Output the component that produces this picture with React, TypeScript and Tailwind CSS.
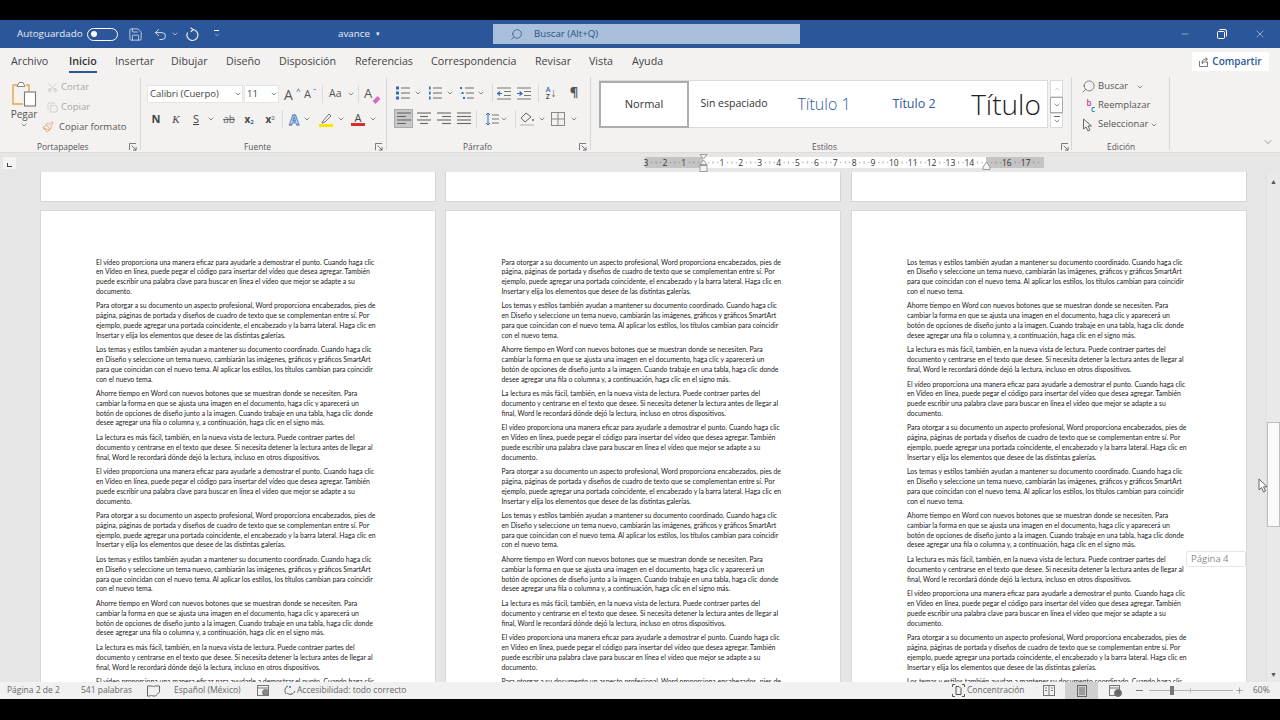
import React from "react";
import { Scissors, Copy, Paintbrush, ChevronDown, ChevronUp, Save, Undo2, Search, Minus, X, Plus } from "lucide-react";

const A = ["El vídeo proporciona una manera eficaz para ayudarle a demostrar el punto. Cuando haga clic","en Vídeo en línea, puede pegar el código para insertar del vídeo que desea agregar. También","puede escribir una palabra clave para buscar en línea el vídeo que mejor se adapte a su","documento."];
const B = ["Para otorgar a su documento un aspecto profesional, Word proporciona encabezados, pies de","página, páginas de portada y diseños de cuadro de texto que se complementan entre sí. Por","ejemplo, puede agregar una portada coincidente, el encabezado y la barra lateral. Haga clic en","Insertar y elija los elementos que desee de las distintas galerías."];
const C = ["Los temas y estilos también ayudan a mantener su documento coordinado. Cuando haga clic","en Diseño y seleccione un tema nuevo, cambiarán las imágenes, gráficos y gráficos SmartArt","para que coincidan con el nuevo tema. Al aplicar los estilos, los títulos cambian para coincidir","con el nuevo tema."];
const D = ["Ahorre tiempo en Word con nuevos botones que se muestran donde se necesiten. Para","cambiar la forma en que se ajusta una imagen en el documento, haga clic y aparecerá un","botón de opciones de diseño junto a la imagen. Cuando trabaje en una tabla, haga clic donde","desee agregar una fila o columna y, a continuación, haga clic en el signo más."];
const E = ["La lectura es más fácil, también, en la nueva vista de lectura. Puede contraer partes del","documento y centrarse en el texto que desee. Si necesita detener la lectura antes de llegar al","final, Word le recordará dónde dejó la lectura, incluso en otros dispositivos."];
const cycle = [A, B, C, D, E];

function Page({ start }: { start: number }) {
  const paras = Array.from({ length: 11 }, (_, i) => cycle[(start + i) % 5]);
  return (
    <div className="w-[396px] shrink-0 flex flex-col gap-[8px]">
      <div className="h-[30px] bg-white border-x border-b border-[#d4d4d4]" />
      <div className="flex-1 bg-white border-x border-t border-[#d8d8d8] pt-[46.5px] pl-[55.5px] font-['Lato',sans-serif] text-[6.87px] leading-[9.72px] text-[#222] overflow-hidden">
        {paras.map((p, i) => (
          <div key={i} className="mb-[5.05px]">
            {p.map((l, j) => <div key={j} className="whitespace-nowrap">{l}</div>)}
          </div>
        ))}
      </div>
    </div>
  );
}

const Chev = () => <ChevronDown size={8} strokeWidth={2} className="text-[#555]" />;

function Slot({ w, children }: { w: string; children?: React.ReactNode }) {
  return <div className={`${w} flex items-center justify-center shrink-0`}>{children}</div>;
}
const Sep = () => <div className="w-px h-[18px] bg-[#dadada] shrink-0" />;

function Launcher() {
  return (
    <svg width="8" height="8" viewBox="0 0 9 9" fill="none" stroke="#666" strokeWidth="1">
      <path d="M.5 8V.5H8" /><path d="M3 3l5 5M8 4.5V8H4.5" />
    </svg>
  );
}

function Lines({ kind }: { kind: "l" | "c" | "r" | "j" }) {
  const rows = { l: ["M1 2h14", "M1 5.5h9", "M1 9h14", "M1 12.5h9"], c: ["M1 2h14", "M4 5.5h8", "M1 9h14", "M4 12.5h8"], r: ["M1 2h14", "M6 5.5h9", "M1 9h14", "M6 12.5h9"], j: ["M1 2h14", "M1 5.5h14", "M1 9h14", "M1 12.5h14"] }[kind];
  return <svg width="16" height="15" viewBox="0 0 16 15" fill="none" stroke="#666" strokeWidth="1.1">{rows.map((d) => <path key={d} d={d} />)}</svg>;
}
function Bullets({ mode }: { mode: "b" | "n" | "m" }) {
  const dot = "#2b6cb8";
  return (
    <svg width="15" height="14" viewBox="0 0 15 14" fill="none">
      {[2, 7, 12].map((y, i) => (
        <g key={y}>
          {mode === "m" ? <rect x={i * 1.5} y={y - 1} width="2" height="2" fill={dot} /> : mode === "n" ? <rect x="1" y={y - 1.5} width="1.6" height="3" fill={dot} /> : <rect x="0" y={y - 1.5} width="3" height="3" fill={dot} />}
          <path d={`M${mode === "m" ? 5 + i : 5} ${y}H14`} stroke="#777" strokeWidth="1.1" />
        </g>
      ))}
    </svg>
  );
}
function Indent({ inc }: { inc?: boolean }) {
  return (
    <svg width="14" height="13" viewBox="0 0 14 13" fill="none">
      <path d="M0 1h14M0 12h14M7 4.5h7M7 8.5h7" stroke="#777" strokeWidth="1.1" />
      <path d={inc ? "M0 6.5h4M2.5 4.5l2.5 2-2.5 2" : "M5 6.5H1M3 4.5l-2.5 2 2.5 2"} stroke="#2b6cb8" strokeWidth="1.2" />
    </svg>
  );
}

const tabs: [string, string][] = [["Archivo", "w-[58px]"], ["Inicio", "w-[46px]"], ["Insertar", "w-[56px]"], ["Dibujar", "w-[55px]"], ["Diseño", "w-[53px]"], ["Disposición", "w-[76px]"], ["Referencias", "w-[76px]"], ["Correspondencia", "w-[104px]"], ["Revisar", "w-[54px]"], ["Vista", "w-[43px]"], ["Ayuda", "w-[50px]"]];

function Unit({ n }: { n: string }) {
  return (
    <div className="w-[18.9px] shrink-0 flex items-center">
      <span className="w-[6px] -ml-[3px] text-center">{n}</span>
      <span className="w-[5px] text-center text-[#777]">·</span>
      <span className="w-[4px] text-center text-[6px] text-[#777]">ı</span>
      <span className="w-[5px] text-center text-[#777]">·</span>
    </div>
  );
}

function Ruler() {
  const left = ["3", "2", "1"];
  const right = ["", "1", "2", "3", "4", "5", "6", "7", "8", "9", "10", "11", "12", "13", "14"];
  return (
    <div className="h-[19px] bg-[#e6e6e6] flex items-center relative">
      <div className="ml-[3px] w-[13px] h-[12px] bg-[#f4f4f4] flex items-end justify-center pb-[2px]">
        <div className="w-[5px] h-[4px] border-l-[1.5px] border-b-[1.5px] border-[#444]" />
      </div>
      <div className="ml-[629px] flex h-[11px] text-[8.5px] leading-[11px] text-[#333]">
        <div className="w-[58px] bg-[#c4c4c4] flex pl-[1px]">{left.map((n) => <Unit key={n} n={n} />)}</div>
        <div className="w-[283px] bg-white flex">{right.map((n, i) => <Unit key={i} n={n} />)}</div>
        <div className="w-[58px] bg-[#c4c4c4] flex">{["", "16", "17"].map((n, i) => <Unit key={i} n={n} />)}</div>
      </div>
      <svg className="absolute left-[699px] top-[1px]" width="9" height="19" viewBox="0 0 9 19" fill="#f3f3f3" stroke="#888" strokeWidth=".8">
        <path d="M1 .5h7L4.5 5z" /><path d="M4.5 6L1 10.5h7z" /><rect x="1" y="11.5" width="7" height="6" />
      </svg>
      <svg className="absolute left-[982px] top-[8px]" width="9" height="9" viewBox="0 0 9 9" fill="#f3f3f3" stroke="#888" strokeWidth=".8">
        <path d="M4.5 1L1 6v2.5h7V6z" />
      </svg>
    </div>
  );
}

export default function App() {
  return (
    <div className="w-[1280px] h-[720px] bg-black flex flex-col overflow-hidden font-['Open_Sans',sans-serif] relative">
      <div className="h-[20px] shrink-0" />
      {/* Title bar */}
      <div className="h-[28px] shrink-0 bg-[#2b579a] flex items-center text-[#e6ecf5] text-[9.8px]">
        <span className="ml-[17px] w-[70px]">Autoguardado</span>
        <div className="w-[31px] h-[13px] rounded-full border border-white flex items-center pl-[3px]"><div className="w-[6px] h-[6px] rounded-full bg-white" /></div>
        <Save size={15} strokeWidth={1.2} className="ml-[10px]" />
        <Undo2 size={15} strokeWidth={1.4} className="ml-[10px]" />
        <ChevronDown size={8} className="ml-[3px]" />
        <svg className="ml-[6px]" width="15" height="15" viewBox="0 0 15 15" fill="none" stroke="#e6ecf5" strokeWidth="1.2"><path d="M8 2.5a5.5 5.5 0 1 1-5.5 3" /><path d="M5.5.8 8.2 2.5 5.8 4.8" /></svg>
        <div className="ml-[13px] flex flex-col items-center w-[7px]"><div className="w-[5px] h-px bg-white mb-[1px]" /><ChevronDown size={6} strokeWidth={2} /></div>
        <span className="ml-[118px] w-[38px]">avance</span>
        <span className="text-[7px] w-[5px]">▾</span>
        <div className="ml-[112px] w-[307px] h-[20px] bg-[#aabfdb] flex items-center text-[#2b4f85] text-[9.7px]">
          <Search size={13} strokeWidth={1.3} className="ml-[17px] -scale-x-100" />
          <span className="ml-[11px]">Buscar (Alt+Q)</span>
        </div>
        <Minus size={10} strokeWidth={1.2} className="ml-[380px]" />
        <svg className="ml-[27px]" width="10" height="10" viewBox="0 0 10 10" fill="none" stroke="#fff" strokeWidth="1"><rect x=".5" y="2.5" width="7" height="7" rx="1" /><path d="M2.5 .5H8a1.5 1.5 0 011.5 1.5v5.5" /></svg>
        <X size={12} strokeWidth={1.1} className="ml-[27px]" />
      </div>
      {/* Tabs */}
      <div className="h-[27px] shrink-0 bg-[#f3f2f1] flex items-center text-[10.7px] text-[#444]">
        <div className="w-[11px]" />
        {tabs.map(([t, w]) => (
          <div key={t} className={`${w} h-full flex items-center relative shrink-0`}>
            <span className={t === "Inicio" ? "font-semibold text-[#333]" : ""}>{t}</span>
            {t === "Inicio" && <div className="absolute left-0 bottom-[2px] w-[28px] h-[2px] bg-[#2b579a]" />}
          </div>
        ))}
        <div className="ml-[510px] w-[77px] h-[19px] bg-white flex items-center justify-center gap-[3px] text-[#2b579a] text-[10px] font-semibold">
          <svg width="10" height="10" viewBox="0 0 10 10" fill="none" stroke="#555" strokeWidth=".8"><path d="M.5 4v5.5h8V5H3.5v2" /><path d="M3 6c0-3 2-4 5-4M6.5 .5 8.5 2 6.5 4" /></svg>
          Compartir
        </div>
      </div>
      {/* Ribbon */}
      <div className="h-[78px] shrink-0 bg-[#f3f2f1] flex text-[9.5px] text-[#555] border-b border-[#dcdcdc]">
        {/* Portapapeles */}
        <div className="w-[141px] shrink-0 border-r border-[#d6d6d6] my-[2px] flex flex-col">
          <div className="flex flex-1">
            <div className="w-[47px] flex flex-col items-center pt-[4px] pl-[1px]">
              <svg width="25" height="26" viewBox="0 0 25 26" fill="none">
                <path d="M1 4h5M14 4h3v7" stroke="#e3a44f" strokeWidth="1.4" /><path d="M1 3.5V23h10" stroke="#e3a44f" strokeWidth="1.4" fill="#faf3e6" />
                <path d="M5 5.5 7 1.5h4l2 4z" fill="#fff" stroke="#888" strokeWidth="1" />
                <rect x="12.5" y="11" width="11" height="14" fill="#fff" stroke="#777" strokeWidth="1.1" />
              </svg>
              <span className="text-[10px] leading-[13px] mt-[1px] text-[#555]">Pegar</span>
              <Chev />
            </div>
            <div className="flex flex-col pt-[2px] gap-[4px]">
              <div className="h-[16px] flex items-center gap-[3px] text-[#a8a8a8]"><Scissors size={11} strokeWidth={1} className="-rotate-90" /><span>Cortar</span></div>
              <div className="h-[16px] flex items-center gap-[3px] text-[#a8a8a8]"><Copy size={11} strokeWidth={1} /><span>Copiar</span></div>
              <div className="h-[16px] flex items-center gap-[3px] text-[#555]"><Paintbrush size={12} strokeWidth={1.3} className="text-[#d8893a] -ml-[5px]" /><span className="ml-[2px]">Copiar formato</span></div>
            </div>
          </div>
          <div className="h-[12px] -mb-[3px] flex items-center text-[8.4px] pr-[3px]"><span className="ml-[37px] flex-1">Portapapeles</span><Launcher /></div>
        </div>
        {/* Fuente */}
        <div className="w-[246px] shrink-0 border-r border-[#d6d6d6] my-[2px] flex flex-col pl-[6px]">
          <div className="flex-1 flex flex-col pt-[8px] gap-[7px]">
            <div className="h-[18px] flex items-center">
              <div className="w-[96px] h-[18px] bg-white border border-[#e4e4e4] flex items-center pl-[2px] text-[#444]"><span className="flex-1">Calibri (Cuerpo)</span><Chev /></div>
              <div className="ml-[1px] w-[35px] h-[18px] bg-white border border-[#e4e4e4] flex items-center pl-[2px] text-[#444]"><span className="flex-1">11</span><Chev /></div>
              <span className="ml-[5px] w-[12px] text-[14px] text-[#555]">A</span><span className="w-[5px] text-[8px] -mt-[6px] text-[#2b579a]">^</span>
              <span className="ml-[3px] w-[9px] text-[11px] text-[#555]">A</span><span className="w-[4px] text-[8px] -mt-[6px] text-[#2b579a]">ˇ</span>
              <div className="ml-[5px]"><Sep /></div>
              <span className="ml-[6px] w-[16px] text-[10.5px] text-[#555]">Aa</span><div className="ml-[2px]"><Chev /></div>
              <div className="ml-[3px]"><Sep /></div>
              <div className="ml-[5px] relative w-[14px] text-[13px] text-[#555]">A<div className="absolute right-[-2px] bottom-[2px] w-[7px] h-[4px] bg-[#d36fc0] -rotate-45" /></div>
            </div>
            <div className="h-[18px] flex items-center">
              <Slot w="w-[18px]"><b className="text-[11px] text-[#444]">N</b></Slot>
              <Slot w="w-[22px]"><i className="text-[11px] text-[#444] font-['Liberation_Serif',serif]">K</i></Slot>
              <Slot w="w-[18px]"><span className="text-[11px] underline text-[#444]">S</span></Slot>
              <Slot w="w-[12px]"><Chev /></Slot>
              <Slot w="w-[24px]"><span className="text-[10px] line-through text-[#666]">ab</span></Slot>
              <Slot w="w-[16px]"><b className="text-[10px] text-[#444]">x<sub className="text-[6px] text-[#2b6cb8]">2</sub></b></Slot>
              <div className="w-[5px]" />
              <Slot w="w-[16px]"><b className="text-[10px] text-[#444]">x<sup className="text-[6px] text-[#888]">2</sup></b></Slot>
              <div className="w-[4px]" /><Sep />
              <div className="w-[3px]" />
              <Slot w="w-[16px]"><span className="text-[14px] font-bold text-[#dbe8f7] [-webkit-text-stroke:0.8px_#2b6cb8]">A</span></Slot>
              <Slot w="w-[10px]"><Chev /></Slot>
              <div className="w-[6px]" />
              <Slot w="w-[16px]">
                <svg width="14" height="15" viewBox="0 0 14 15" fill="none"><path d="M4 9 10 2l2 2-6 6-3 1z" stroke="#777" /><rect x="0" y="12" width="14" height="3" fill="#ffe600" /></svg>
              </Slot>
              <div className="w-[2px]" />
              <Slot w="w-[10px]"><Chev /></Slot>
              <div className="w-[4px]" />
              <Slot w="w-[16px]"><div className="flex flex-col items-center"><span className="text-[11px] leading-[11px] text-[#444]">A</span><div className="w-[14px] h-[3px] bg-[#d92c2c]" /></div></Slot>
              <div className="w-[2px]" />
              <Slot w="w-[10px]"><Chev /></Slot>
            </div>
          </div>
          <div className="h-[12px] -mb-[3px] flex items-center text-[8.4px] pr-[3px]"><span className="ml-[97px] flex-1">Fuente</span><Launcher /></div>
        </div>
        {/* Párrafo */}
        <div className="w-[204px] shrink-0 border-r border-[#d6d6d6] my-[2px] flex flex-col pl-[7px]">
          <div className="flex-1 flex flex-col pt-[7px] gap-[7px]">
            <div className="h-[18px] flex items-center">
              <Slot w="w-[18px]"><Bullets mode="b" /></Slot><Slot w="w-[12px]"><Chev /></Slot>
              <div className="w-[2px]" /><Slot w="w-[18px]"><Bullets mode="n" /></Slot><Slot w="w-[12px]"><Chev /></Slot>
              <div className="w-[2px]" /><Slot w="w-[18px]"><Bullets mode="m" /></Slot><Slot w="w-[10px]"><Chev /></Slot>
              <div className="w-[6px]" /><Sep />
              <div className="w-[3px]" /><Slot w="w-[16px]"><Indent /></Slot>
              <div className="w-[4px]" /><Slot w="w-[16px]"><Indent inc /></Slot>
              <div className="w-[6px]" /><Sep />
              <div className="w-[2px]" /><Slot w="w-[20px]">
                <div className="flex items-center"><div className="flex flex-col text-[7px] leading-[7px] font-semibold"><span className="text-[#2b6cb8]">A</span><span className="text-[#444]">Z</span></div><span className="text-[12px] text-[#555] leading-none">↓</span></div>
              </Slot>
              <div className="w-[4px]" /><Slot w="w-[18px]"><span className="text-[13px] font-bold text-[#555]">¶</span></Slot>
            </div>
            <div className="h-[19px] flex items-center">
              <Slot w="w-[19px]"><div className="w-[19px] h-[19px] bg-[#c8c8c8] border border-[#aaa] flex items-center justify-center"><Lines kind="l" /></div></Slot>
              <div className="w-[1px]" /><Slot w="w-[20px]"><Lines kind="c" /></Slot>
              <Slot w="w-[20px]"><Lines kind="r" /></Slot>
              <Slot w="w-[20px]"><Lines kind="j" /></Slot>
              <div className="w-[2px]" /><Sep />
              <div className="w-[6px]" /><Slot w="w-[16px]">
                <svg width="15" height="14" viewBox="0 0 15 14" fill="none"><path d="M4 1v12M2 3l2-2 2 2M2 11l2 2 2-2" stroke="#2b6cb8" /><path d="M8 3h7M8 7h7M8 11h7" stroke="#777" /></svg>
              </Slot>
              <Slot w="w-[10px]"><Chev /></Slot>
              <div className="w-[6px]" /><Sep />
              <div className="w-[3px]" /><Slot w="w-[16px]">
                <svg width="15" height="14" viewBox="0 0 15 14" fill="none"><path d="M6 1 1 6l4 4 6-5z" stroke="#666" /><rect x="0" y="12" width="14" height="2" fill="#d2d2d2" /><circle cx="13" cy="8" r="1" fill="#666" /></svg>
              </Slot>
              <div className="w-[2px]" /><Slot w="w-[10px]"><Chev /></Slot>
              <div className="w-[3px]" /><Slot w="w-[16px]">
                <svg width="14" height="14" viewBox="0 0 14 14" fill="none" stroke="#888"><rect x=".5" y=".5" width="13" height="13" /><path d="M7 0v14M0 7h14" /></svg>
              </Slot>
              <div className="w-[3px]" /><Slot w="w-[10px]"><Chev /></Slot>
            </div>
          </div>
          <div className="h-[12px] -mb-[3px] flex items-center text-[8.4px] pr-[3px]"><span className="ml-[69px] flex-1">Párrafo</span><Launcher /></div>
        </div>
        {/* Estilos */}
        <div className="w-[481px] shrink-0 border-r border-[#d6d6d6] my-[2px] flex flex-col pl-[8px]">
          <div className="flex-1 flex pt-[3px]">
            <div className="w-[449px] h-[48px] bg-white border-y border-r border-[#dadada] flex items-center text-[#333]">
              <div className="w-[90px] h-[47px] border-2 border-[#adadad] flex items-center justify-center text-[11px]">Normal</div>
              <div className="w-[90px] text-center text-[10.5px]">Sin espaciado</div>
              <div className="w-[90px] text-center text-[16px] font-light text-[#2f5b9e]">Título 1</div>
              <div className="w-[90px] text-center text-[12.5px] text-[#2f5b9e]">Título 2</div>
              <div className="w-[88px] pl-[6px] text-center text-[28px] font-light text-[#222] whitespace-nowrap">Título</div>
            </div>
            <div className="ml-[2px] w-[13px] h-[48px] flex flex-col text-[#777]">
              <div className="h-[17px] bg-white border border-[#dadada] flex items-center justify-center text-[#bbb]"><ChevronUp size={8} /></div>
              <div className="h-[16px] bg-white border-x border-[#aaa] border-y flex items-center justify-center"><Chev /></div>
              <div className="h-[15px] bg-white border border-[#dadada] flex flex-col items-center justify-center"><div className="w-[6px] h-px bg-[#666]" /><Chev /></div>
            </div>
          </div>
          <div className="h-[12px] -mb-[3px] flex items-center text-[8.4px] pr-[2px]"><span className="ml-[213px] flex-1">Estilos</span><Launcher /></div>
        </div>
        {/* Edición */}
        <div className="w-[98px] shrink-0 border-r border-[#d6d6d6] my-[2px] flex flex-col pl-[10px]">
          <div className="flex-1 flex flex-col">
            <div className="h-[19px] flex items-center">
              <Search size={15} strokeWidth={1.1} className="-scale-x-100 text-[#555] -ml-[1px]" /><span className="ml-[2px] w-[38px]">Buscar</span><Chev />
            </div>
            <div className="h-[19px] flex items-center">
              <span className="w-[14px] flex flex-col text-[8px] leading-[6px] font-semibold"><span className="text-center text-[#c2409a]">b</span><span className="text-right pr-[1px] text-[#2b7cb8]">c</span></span><span className="ml-[2px]">Reemplazar</span>
            </div>
            <div className="h-[19px] flex items-center">
              <svg width="11" height="14" viewBox="0 0 11 14" fill="none" stroke="#666" className="mr-[5px]"><path d="M1.5 1v10l2.5-2 2 4 2-1-2-4h3.5z" /></svg>
              <span className="w-[52px]">Seleccionar</span><Chev />
            </div>
          </div>
          <div className="h-[12px] -mb-[3px] flex items-center text-[8.4px]"><span className="ml-[25px]">Edición</span></div>
        </div>
        <div className="flex-1 flex items-end pb-[4px] pl-[92px]"><ChevronDown size={12} strokeWidth={1.2} /></div>
      </div>
      <Ruler />
      {/* Document */}
      <div className="flex-1 min-h-0 bg-[#e6e6e6] flex overflow-hidden relative">
        <div className="w-[1266px] shrink-0 pl-[39.5px] flex gap-[9.5px]">
          <Page start={0} />
          <Page start={1} />
          <Page start={2} />
        </div>
        <div className="w-[14px] shrink-0 bg-[#e9e9e9] flex flex-col items-center text-[#555] border-l border-[#e0e0e0]">
          <span className="mt-[5px] text-[7px] leading-[9px]">▲</span>
          <div className="mt-[236px] w-[13px] h-[105px] bg-[#fafafa] border border-[#bdbdbd]" />
          <span className="mt-[143px] text-[7px] leading-[9px]">▼</span>
        </div>
        <div className="absolute left-[1186px] top-[379px] w-[60px] h-[16px] bg-white border border-[#e6e6e6] rounded-[2px] flex items-center pl-[4px] text-[9.5px] text-[#8a8a8a]">Página 4</div>
        <svg className="absolute left-[1258px] top-[306px]" width="10" height="15" viewBox="0 0 10 15" fill="#fff" stroke="#555" strokeWidth=".9"><path d="M1 1v11l2.5-2.5L5.5 14l2-1-2-4.2H9z" /></svg>
      </div>
      {/* Status bar */}
      <div className="h-[17px] shrink-0 bg-[#f1f1f1] flex items-center text-[8.5px] text-[#666] whitespace-nowrap">
        <span className="ml-[7px] w-[74px]">Página 2 de 2</span>
        <span className="w-[66px]">541 palabras</span>
        <svg width="13" height="12" viewBox="0 0 13 12" fill="none" stroke="#666"><path d="M.5 1h5l1 1 1-1h5v6l-4 4h-3l-1-1-1 1h-3z" /></svg>
        <span className="ml-[14px] w-[83px]">Español (México)</span>
        <svg width="13" height="12" viewBox="0 0 13 12" fill="none" stroke="#777"><rect x=".5" y=".5" width="11" height="10" /><path d="M0 3h12" /><circle cx="8.5" cy="7.5" r="3" fill="#888" /></svg>
        <svg className="ml-[13px]" width="14" height="12" viewBox="0 0 14 12" fill="none" stroke="#555"><path d="M5 1C2 2 1 6 3 9M4 8c2 2 6 2 8-2" /><circle cx="7" cy="2" r="1" fill="#2b6cb8" stroke="none" /></svg>
        <span className="w-[112px]">Accesibilidad: todo correcto</span>
        <svg className="ml-[543px]" width="13" height="13" viewBox="0 0 13 13" fill="none" stroke="#555"><path d="M.5 3V.5H3M10 .5h2.5V3M12.5 10v2.5H10M3 12.5H.5V10" /><path d="M4 2.5h3l2 2v6H4z" /></svg>
        <span className="ml-[2px] w-[76px]">Concentración</span>
        <svg width="12" height="11" viewBox="0 0 12 11" fill="none" stroke="#777"><rect x=".5" y=".5" width="11" height="10" /><path d="M6 .5v10M2 3h2M2 5.5h2M8 3h2M8 5.5h2" /></svg>
        <div className="ml-[10px] w-[33px] h-[17px] bg-[#cfcfcf] flex items-center justify-center">
          <svg width="10" height="12" viewBox="0 0 10 12" fill="none" stroke="#666"><rect x=".5" y=".5" width="9" height="11" /><path d="M2 3h6M2 5h6M2 7h6M2 9h6" /></svg>
        </div>
        <svg className="ml-[11px]" width="13" height="12" viewBox="0 0 13 12" fill="none" stroke="#777"><rect x=".5" y=".5" width="10" height="10" /><path d="M0 3h11" /><circle cx="9" cy="8" r="3.5" fill="#666" /></svg>
        <div className="ml-[14px] w-[7px] h-px bg-[#777]" />
        <div className="ml-[6px] w-[84px] h-[1px] bg-[#b5b5b5] relative">
          <div className="absolute left-[21px] -top-[4px] w-[4px] h-[9px] bg-[#777]" />
          <div className="absolute left-[41px] -top-[2px] w-px h-[5px] bg-[#bbb]" />
        </div>
        <Plus size={9} strokeWidth={1.4} className="ml-[2px]" />
        <span className="ml-[9px]">60%</span>
      </div>
      <div className="h-[21px] shrink-0" />
    </div>
  );
}
